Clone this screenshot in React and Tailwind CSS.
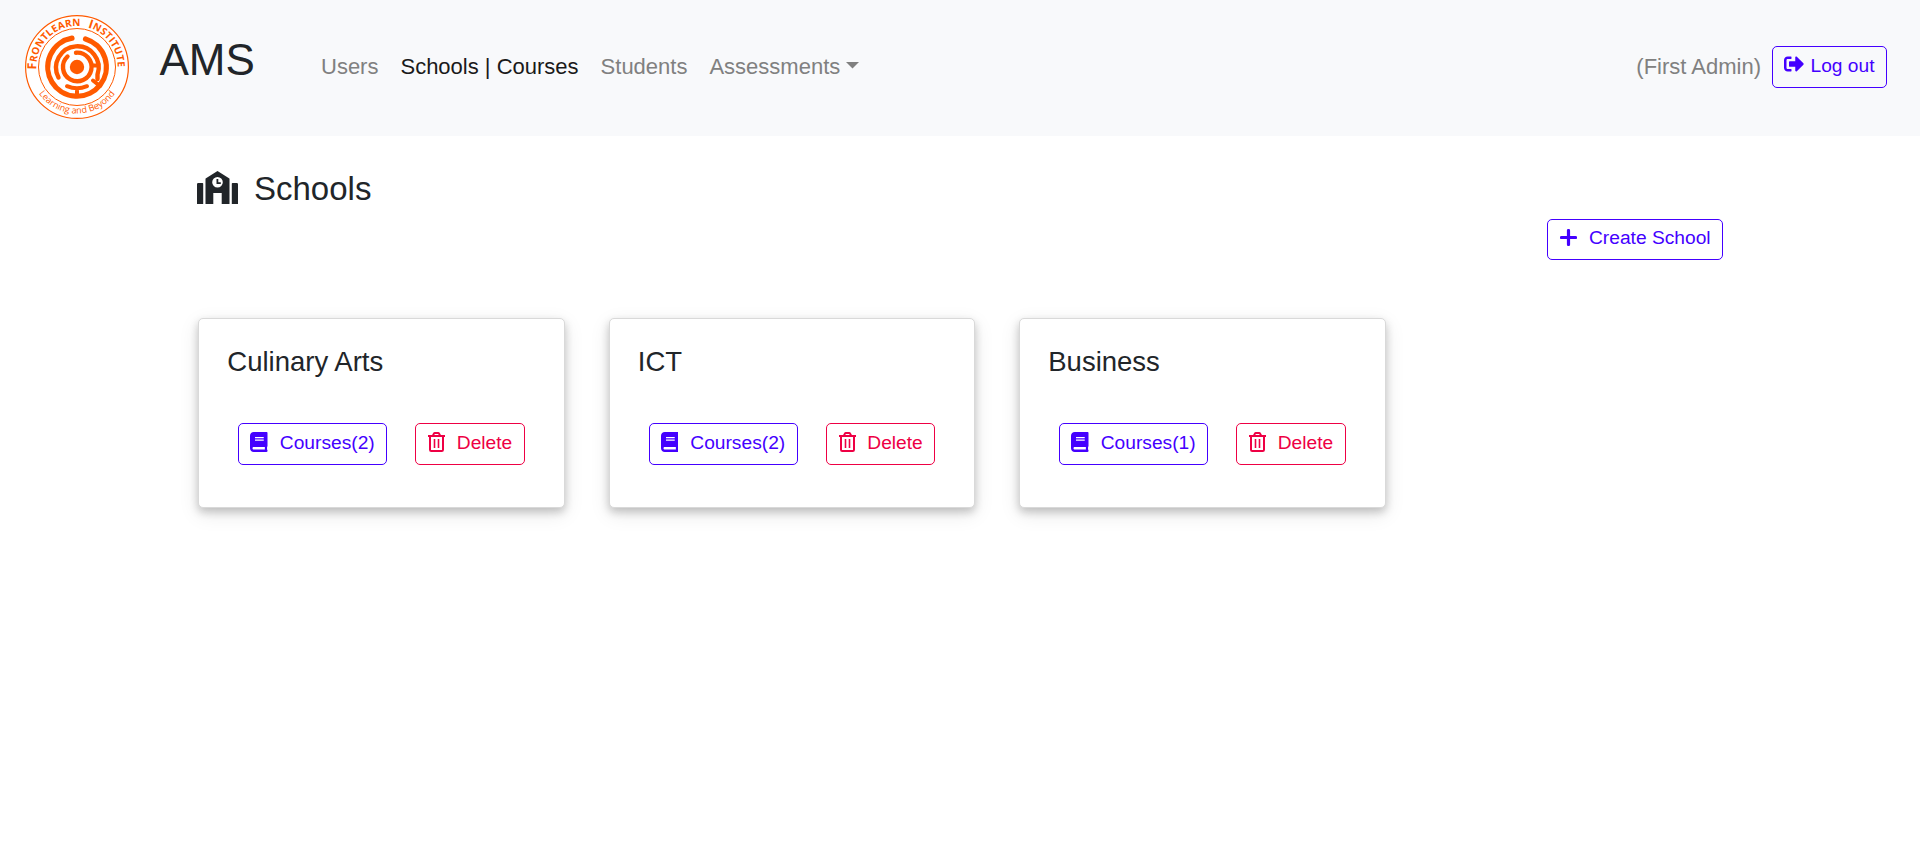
import React from "react";
import { FaBook, FaSignOutAlt } from "react-icons/fa";

function Logo() {
  return (
    <svg className="h-[106px] w-[106px] shrink-0" viewBox="-53 -53 106 106" fill="none" stroke="#ff5a00">
      <circle r="51.4" fill="#fff" strokeWidth="1.2" />
      <circle r="38.5" strokeWidth="1" />
      <g strokeWidth="4.4" strokeLinecap="round">
        <path d="M-5 -28.9A29.300 29.300 0 1 0 8.500 -28.100" strokeWidth="5.200" />
        <path d="M-18.500 10.500A21.300 21.300 0 1 1 20.500 7.500V12" />
        <path d="M-9.500 -10.500A14.300 14.300 0 1 0 -1 -14.300" />
        <path d="M-10 19.200Q0 23.500 10 19.200M0 22V28M15.500 -1.500H21M16 13.500L23 19" strokeWidth="4" />
      </g>
      <circle r="7.2" fill="#ff5a00" stroke="none" />
      <defs>
        <path id="logo-top" d="M-40.600 2.500A40.700 40.700 0 1 1 40.600 2.500L40.300 7" />
        <path id="logo-bottom" d="M-46.500 0A46.500 46.500 0 0 0 46.500 0" />
      </defs>
      <g fill="#ff5a00" stroke="none" fontFamily="Open Sans, sans-serif">
        <text fontWeight="700" fontSize="10" textLength="131" wordSpacing="4.5">
          <textPath href="#logo-top">
            <tspan fontSize="12.4">F</tspan>RONTLEARN <tspan fontSize="12.4">I</tspan>NSTITUTE
          </textPath>
        </text>
        <text fontSize="9" textAnchor="middle">
          <textPath href="#logo-bottom" startOffset="50%">Learning and Beyond</textPath>
        </text>
      </g>
    </svg>
  );
}

function SchoolIcon() {
  return (
    <svg className="h-[33px] w-[41px] shrink-0" viewBox="0 0 41 33" fill="currentColor">
      <path d="M1.2 12H5.5a.7.7 0 0 1 .7.7V33H0V13.2A1.2 1.2 0 0 1 1.2 12ZM39.800 12H35.500a.7.7 0 0 0-.7.7V33H41V13.200A1.200 1.200 0 0 0 39.800 12Z" />
      <path fillRule="evenodd" d="M20.500 0L32 7.200a1 1 0 0 1 .5.9V33H24.700V22H16.300V33H8.500V8.100a1 1 0 0 1 .5-.9ZM20.500 6a5.300 5.300 0 1 0 0 10.600a5.300 5.300 0 0 0 0-10.600Z" />
      <path d="M19.500 8h1.800v3.200h2.500v1.800h-4.300z" />
    </svg>
  );
}

function PlusIcon() {
  return (
    <svg className="mt-[3px] h-[17px] w-[17px] shrink-0" viewBox="0 0 17 17" fill="none" stroke="currentColor">
      <path d="M8.500 1.500V15.500M1.500 8.500H15.500" strokeWidth="3.2" strokeLinecap="round" />
    </svg>
  );
}

function TrashIcon() {
  return (
    <svg className="mt-px h-5 w-[17px] shrink-0" viewBox="0 0 17 20" fill="none" stroke="currentColor">
      <path d="M0 4H17" strokeWidth="2" />
      <path d="M5 3.500L5.900 1.600Q6.200 1 6.800 1H10.200Q10.800 1 11.100 1.600L12 3.500M2 4V17.800Q2 19 3.200 19H13.800Q15 19 15 17.800V4" strokeWidth="2" />
      <path d="M6.500 7V16M10.500 7V16" strokeWidth="1.600" />
    </svg>
  );
}

const schools = [
  { name: "Culinary Arts", count: 2 },
  { name: "ICT", count: 2 },
  { name: "Business", count: 1 },
];

function SchoolCard({ name, count }) {
  return (
    <article className="h-[190px] w-[366.4px] rounded-[5px] border border-[#d9d9d9] bg-white pl-7 shadow-[0_4px_8px_0_rgba(0,0,0,0.2),0_6px_20px_0_rgba(0,0,0,0.1)]">
      <h2 className="pt-[26px] text-[27.5px] leading-[34px]">{name}</h2>
      <div className="mt-[44px] flex gap-7 pl-[11px]">
        <button className="flex h-[42px] w-[149px] items-start rounded-[5px] border border-[#4400ff] pl-[11px] pt-[7px] text-[19.2px] leading-6 text-[#4400ff]">
          <FaBook className="mt-px h-5 w-[17.500px]" />
          <span className="ml-3">Courses({count})</span>
        </button>
        <button className="flex h-[42px] w-[109.5px] items-start rounded-[5px] border border-[#ee0044] pl-3 pt-[7px] text-[19.2px] leading-6 text-[#ee0044]">
          <TrashIcon />
          <span className="ml-[11.5px]">Delete</span>
        </button>
      </div>
    </article>
  );
}

export default function App() {
  return (
    <div className="min-h-[860px] bg-white font-['Liberation_Sans',Arial,sans-serif] text-[#212529]">
      <header className="flex h-[136px] items-start bg-[#f8f9fb] pl-6 pr-[33px] pt-[14px]">
        <Logo />
        <span className="ml-[29.5px] mt-[20px] w-[161.5px] text-[44px] leading-[52px]">AMS</span>
        <nav className="mt-[37px] flex gap-[22px] text-[22px] leading-8 text-[#808080]">
          <a>Users</a>
          <a className="text-[#1a1a1a]">Schools | Courses</a>
          <a>Students</a>
          <a className="flex">
            Assessments
            <svg className="ml-[6px] mt-[11px] h-[7px] w-[13px]" viewBox="0 0 13 7" fill="currentColor"><path d="M0 0H13L6.500 6.500Z" /></svg>
          </a>
        </nav>
        <span className="ml-auto mt-[37px] text-[22px] leading-8 text-[#808080]">(First Admin)</span>
        <button className="ml-[11px] mt-8 flex h-[42px] w-[115px] items-start rounded-[5px] border border-[#4400ff] pl-[11px] pt-[7px] text-[19.2px] leading-6 text-[#4400ff]">
          <FaSignOutAlt className="h-5 w-5" />
          <span className="ml-[6.5px]">Log out</span>
        </button>
      </header>
      <main className="px-[197px] pt-[35px]">
        <h1 className="flex items-start text-[33px] leading-[36px]">
          <SchoolIcon />
          <span className="ml-[16px]">Schools</span>
        </h1>
        <div className="mt-[12px] flex justify-end">
          <button className="flex h-[41px] w-[176px] items-start rounded-[5px] border border-[#4400ff] pl-3 pt-[6px] text-[19.2px] leading-6 text-[#4400ff]">
            <PlusIcon />
            <span className="ml-3">Create School</span>
          </button>
        </div>
        <section className="mt-[58px] flex gap-[44.1px] pl-[1.3px]">
          {schools.map((s) => (
            <SchoolCard key={s.name} {...s} />
          ))}
        </section>
      </main>
    </div>
  );
}
